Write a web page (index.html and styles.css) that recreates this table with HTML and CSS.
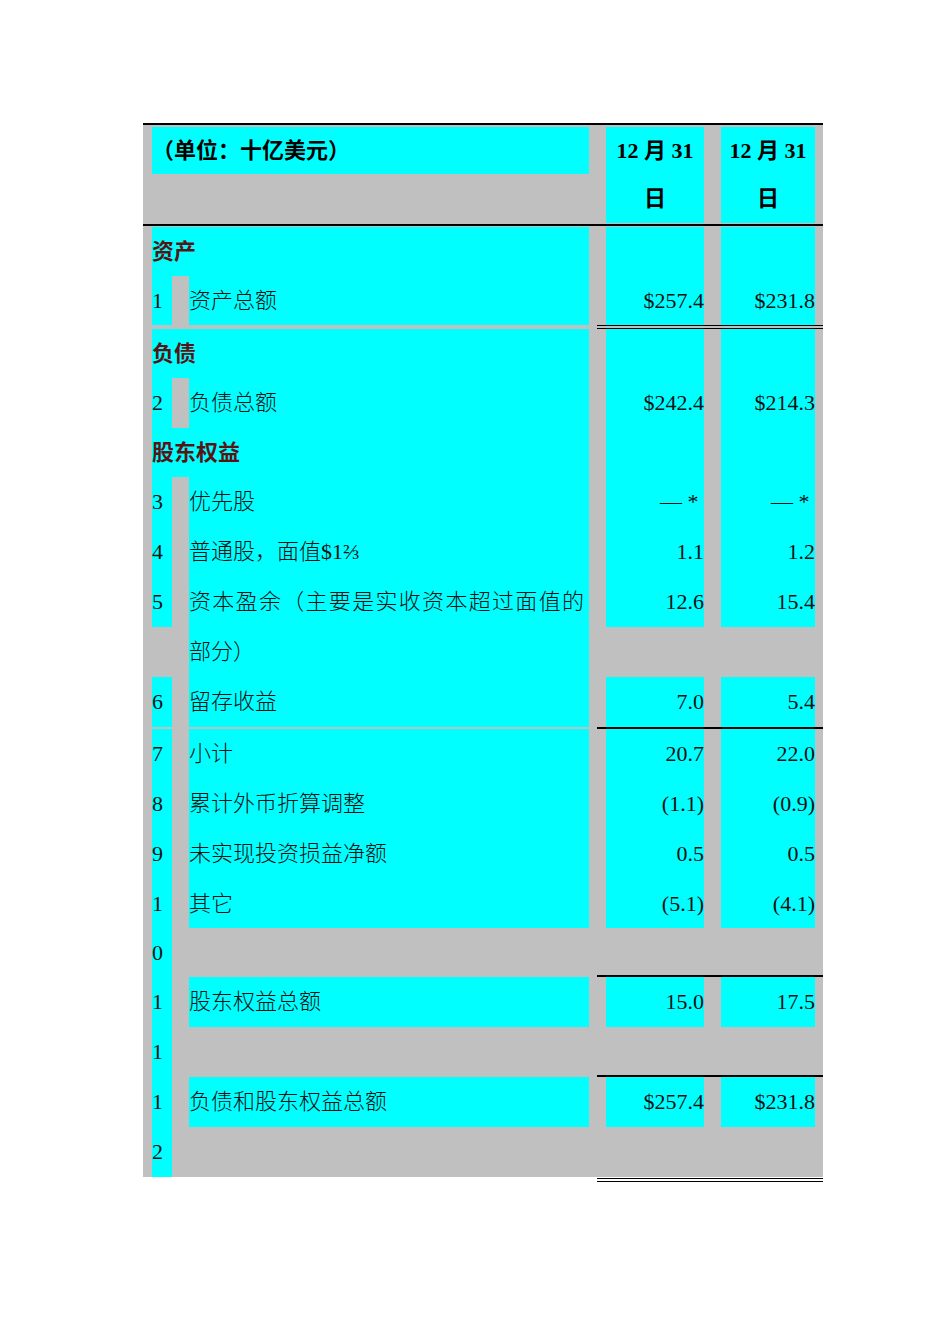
FILE: index.html
```html
<!DOCTYPE html>
<html lang="zh-CN">
<head>
<meta charset="utf-8">
<title>资产负债表</title>
<link rel="stylesheet" href="styles.css">
</head>
<body>
<div class="page">
  <div class="sheet">
    <div class="row head">
      <div class="c span2"><div class="hl h-title">（单位：十亿美元）</div></div>
      <div class="c"><div class="hl h-date">12 月 31 日</div></div>
      <div class="c"><div class="hl h-date">12 月 31 日</div></div>
    </div>

    <div class="row top tight">
      <div class="c span2"><div class="hl sec">资产</div></div>
      <div class="c amt"><div class="hl"></div></div>
      <div class="c amt"><div class="hl"></div></div>
    </div>
    <div class="row dbl tight">
      <div class="c num"><div class="hl">1</div></div>
      <div class="c lbl"><div class="hl">资产总额</div></div>
      <div class="c amt"><div class="hl">$257.4</div></div>
      <div class="c amt"><div class="hl">$231.8</div></div>
    </div>

    <div class="row tight">
      <div class="c span2"><div class="hl sec">负债</div></div>
      <div class="c amt"><div class="hl"></div></div>
      <div class="c amt"><div class="hl"></div></div>
    </div>
    <div class="row">
      <div class="c num"><div class="hl">2</div></div>
      <div class="c lbl"><div class="hl">负债总额</div></div>
      <div class="c amt"><div class="hl">$242.4</div></div>
      <div class="c amt"><div class="hl">$214.3</div></div>
    </div>
    <div class="row tight">
      <div class="c span2"><div class="hl sec">股东权益</div></div>
      <div class="c amt"><div class="hl"></div></div>
      <div class="c amt"><div class="hl"></div></div>
    </div>
    <div class="row">
      <div class="c num"><div class="hl">3</div></div>
      <div class="c lbl"><div class="hl">优先股</div></div>
      <div class="c amt"><div class="hl">— *&nbsp;</div></div>
      <div class="c amt"><div class="hl">— *&nbsp;</div></div>
    </div>
    <div class="row">
      <div class="c num"><div class="hl">4</div></div>
      <div class="c lbl"><div class="hl">普通股，面值$1⅔</div></div>
      <div class="c amt"><div class="hl">1.1</div></div>
      <div class="c amt"><div class="hl">1.2</div></div>
    </div>
    <div class="row">
      <div class="c num"><div class="hl">5</div></div>
      <div class="c lbl"><div class="hl two wrap">资本盈余（主要是实收资本超过面值的部分）</div></div>
      <div class="c amt"><div class="hl">12.6</div></div>
      <div class="c amt"><div class="hl">15.4</div></div>
    </div>
    <div class="row sep">
      <div class="c num"><div class="hl">6</div></div>
      <div class="c lbl"><div class="hl">留存收益</div></div>
      <div class="c amt"><div class="hl">7.0</div></div>
      <div class="c amt"><div class="hl">5.4</div></div>
    </div>

    <div class="row">
      <div class="c num"><div class="hl">7</div></div>
      <div class="c lbl"><div class="hl">小计</div></div>
      <div class="c amt"><div class="hl">20.7</div></div>
      <div class="c amt"><div class="hl">22.0</div></div>
    </div>
    <div class="row">
      <div class="c num"><div class="hl">8</div></div>
      <div class="c lbl"><div class="hl">累计外币折算调整</div></div>
      <div class="c amt"><div class="hl">(1.1)</div></div>
      <div class="c amt"><div class="hl">(0.9)</div></div>
    </div>
    <div class="row">
      <div class="c num"><div class="hl">9</div></div>
      <div class="c lbl"><div class="hl">未实现投资损益净额</div></div>
      <div class="c amt"><div class="hl">0.5</div></div>
      <div class="c amt"><div class="hl">0.5</div></div>
    </div>
    <div class="row sep tight">
      <div class="c num"><div class="hl two">10</div></div>
      <div class="c lbl"><div class="hl">其它</div></div>
      <div class="c amt"><div class="hl">(5.1)</div></div>
      <div class="c amt"><div class="hl">(4.1)</div></div>
    </div>

    <div class="row sep">
      <div class="c num"><div class="hl two">11</div></div>
      <div class="c lbl"><div class="hl">股东权益总额</div></div>
      <div class="c amt"><div class="hl">15.0</div></div>
      <div class="c amt"><div class="hl">17.5</div></div>
    </div>

    <div class="row last">
      <div class="c num"><div class="hl two">12</div></div>
      <div class="c lbl"><div class="hl">负债和股东权益总额</div></div>
      <div class="c amt"><div class="hl">$257.4</div></div>
      <div class="c amt"><div class="hl">$231.8</div></div>
    </div>
  </div>
  <div class="foot-rule"></div>
</div>
</body>
</html>
```

FILE: styles.css
```css
html, body {
  margin: 0;
  padding: 0;
  background: #ffffff;
}

.page {
  margin: 123px 0 0 143px;
  width: 680px;
}

.sheet {
  background: #c0c0c0;
  font-family: "Liberation Serif", "Noto Sans CJK SC", serif;
  font-size: 22px;
  font-weight: 300;
  color: #111111;
}

.row {
  display: grid;
  grid-template-columns: 37px 417px 115px 111px;
}

.c {
  padding: 0 8px 0 9px;
  min-width: 0;
}

.span2 {
  grid-column: span 2;
}

.hl {
  background: #00ffff;
  line-height: 50px;
  min-height: 50px;
}

.hl.two {
  min-height: 100px;
}

.tight .hl {
  line-height: 49px;
  min-height: 49px;
}

.tight .hl.two {
  min-height: 98px;
}

.last .hl.two {
  min-height: 99px;
}

.num .hl {
  word-break: break-all;
}

.amt .hl {
  text-align: right;
}

.wrap {
  text-align: justify;
  padding-right: 5px;
}

.sec {
  font-weight: bold;
  color: #581414;
}

/* header */
.head {
  border-top: 2px solid #000000;
  border-bottom: 2px solid #000000;
  padding: 2px 0 1px;
}

.h-title {
  font-weight: bold;
  line-height: 47px;
  min-height: 47px;
  color: #000000;
}

.h-date {
  font-weight: bold;
  text-align: center;
  line-height: 48px;
  min-height: 96px;
  color: #000000;
}

.top {
  padding-top: 1px;
}

.dbl .amt {
  border-bottom: 4px double #000000;
}

.sep .amt {
  border-bottom: 2px solid #000000;
}

.foot-rule {
  margin: 1px 0 0 454px;
  width: 226px;
  border-top: 4px double #000000;
}
```
